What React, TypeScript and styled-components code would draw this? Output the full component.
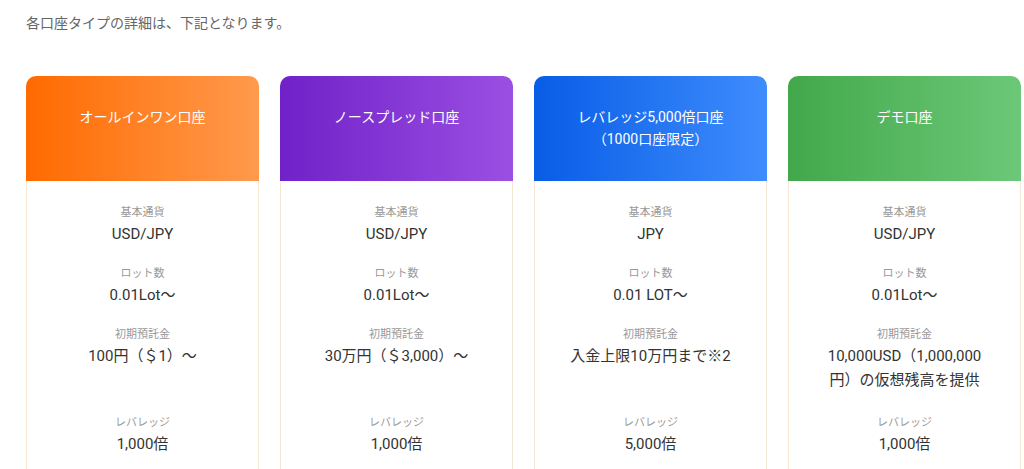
import styled, { createGlobalStyle } from "styled-components";

const GlobalStyle = createGlobalStyle`
  body {
    margin: 0;
    background: #fff;
    font-family: Roboto, "Noto Sans CJK JP", sans-serif;
  }
`;

type Item = { label: string; value: string };
type Plan = { title: string[]; from: string; to: string; items: Item[] };

const plans: Plan[] = [
  {
    title: ["オールインワン口座"],
    from: "#ff6a00",
    to: "#ff9a4d",
    items: [
      { label: "基本通貨", value: "USD/JPY" },
      { label: "ロット数", value: "0.01Lot〜" },
      { label: "初期預託金", value: "100円（＄1）〜" },
      { label: "レバレッジ", value: "1,000倍" },
    ],
  },
  {
    title: ["ノースプレッド口座"],
    from: "#7021c8",
    to: "#9b4fe2",
    items: [
      { label: "基本通貨", value: "USD/JPY" },
      { label: "ロット数", value: "0.01Lot〜" },
      { label: "初期預託金", value: "30万円（＄3,000）〜" },
      { label: "レバレッジ", value: "1,000倍" },
    ],
  },
  {
    title: ["レバレッジ5,000倍口座", "（1000口座限定）"],
    from: "#085de6",
    to: "#3f8cfd",
    items: [
      { label: "基本通貨", value: "JPY" },
      { label: "ロット数", value: "0.01 LOT〜" },
      { label: "初期預託金", value: "入金上限10万円まで※2" },
      { label: "レバレッジ", value: "5,000倍" },
    ],
  },
  {
    title: ["デモ口座"],
    from: "#42a84a",
    to: "#6cc878",
    items: [
      { label: "基本通貨", value: "USD/JPY" },
      { label: "ロット数", value: "0.01Lot〜" },
      { label: "初期預託金", value: "10,000USD（1,000,000円）の仮想残高を提供" },
      { label: "レバレッジ", value: "1,000倍" },
    ],
  },
];

export default function App() {
  return (
    <Page>
      <GlobalStyle />
      <Intro>各口座タイプの詳細は、下記となります。</Intro>
      <Cards>
        {plans.map((p) => (
          <Card key={p.title[0]}>
            <Header $from={p.from} $to={p.to}>
              {p.title.map((t) => (
                <div key={t}>{t}</div>
              ))}
            </Header>
            <Body>
              {p.items.map((it, i) => (
                <Row key={it.label}>
                  <Label>{it.label}</Label>
                  <Value $tall={i === 2}>{it.value}</Value>
                </Row>
              ))}
            </Body>
          </Card>
        ))}
      </Cards>
    </Page>
  );
}

const Page = styled.div`
  padding: 12px 0 0 26px;
  height: 469px;
  box-sizing: border-box;
  overflow: hidden;
`;

const Intro = styled.p`
  margin: 0;
  font-size: 14px;
  line-height: 22px;
  color: #666;
`;

const Cards = styled.div`
  display: flex;
  gap: 21px;
  margin-top: 42px;
`;

const Card = styled.div`
  width: 233px;
  flex: none;
`;

const Header = styled.div<{ $from: string; $to: string }>`
  height: 105px;
  box-sizing: border-box;
  padding-top: 30px;
  border-radius: 10px 10px 0 0;
  background: linear-gradient(90deg, ${(p) => p.$from}, ${(p) => p.$to});
  color: #fff;
  font-size: 14px;
  line-height: 22px;
  text-align: center;
`;

const Body = styled.div`
  border: 1px solid #f6e8d6;
  border-top: none;
  padding: 23px 14px 40px;
  text-align: center;
`;

const Row = styled.div`
  margin-bottom: 19px;
`;

const Label = styled.div`
  font-size: 11px;
  line-height: 18px;
  color: #999;
`;

const Value = styled.div<{ $tall?: boolean }>`
  font-size: 15px;
  line-height: 24px;
  color: #333;
  min-height: ${(p) => (p.$tall ? "51px" : "0")};
  padding: 0 18px;
`;
